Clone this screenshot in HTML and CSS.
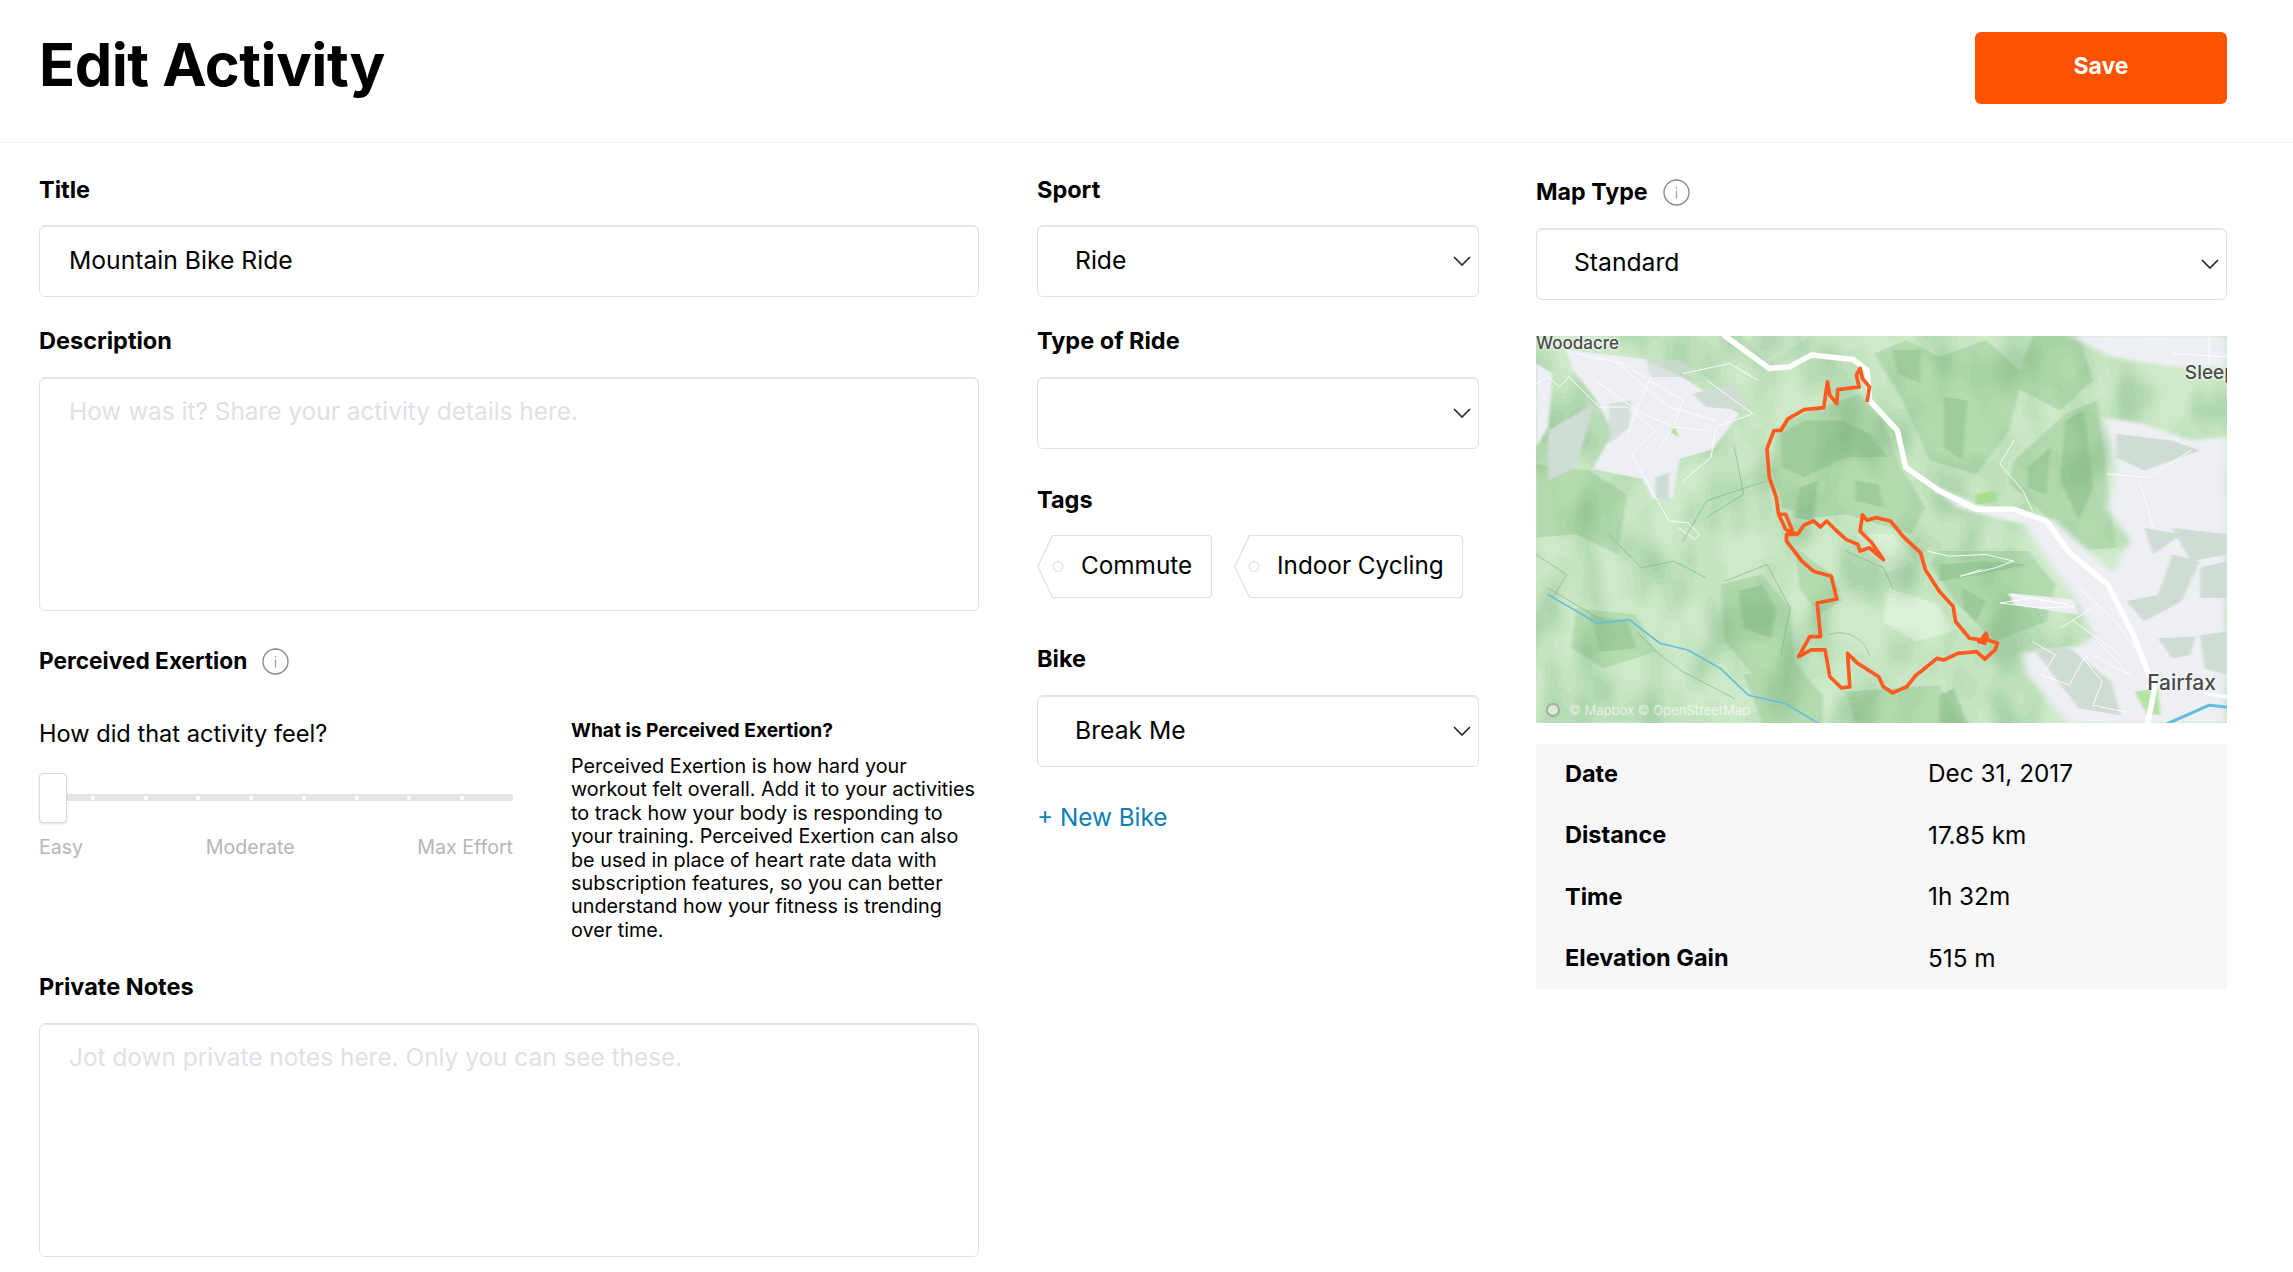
FILE: index.html
```html
<!DOCTYPE html>
<html lang="en">
<head>
<meta charset="utf-8">
<title>Edit Activity</title>
<link rel="stylesheet" href="styles.css">
</head>
<body>
<header class="page-head">
  <h1 class="page-title">Edit Activity</h1>
  <button class="save-btn" type="button">Save</button>
</header>
<main class="form-grid">
  <section class="col-left">
    <div class="label label-first">Title</div>
    <div class="field field-text">Mountain Bike Ride</div>
    <div class="label label-next">Description</div>
    <div class="field field-area placeholder">How was it? Share your activity details here.</div>
    <div class="label label-exertion">Perceived Exertion
      <svg class="info" viewBox="0 0 27 27"><circle cx="13.5" cy="13.5" r="12.5" fill="none" stroke="#8c8c90" stroke-width="1.4"/><rect x="12.9" y="11.5" width="1.2" height="8" fill="#9a9a9e"/><rect x="12.9" y="8" width="1.2" height="1.6" fill="#9a9a9e"/></svg>
    </div>
    <div class="exertion">
      <div class="exertion-main">
        <div class="feel">How did that activity feel?</div>
        <div class="slider">
          <div class="track"><i></i><i></i><i></i><i></i><i></i><i></i><i></i><i></i></div>
          <div class="thumb"></div>
        </div>
        <div class="scale"><span>Easy</span><span>Moderate</span><span>Max Effort</span></div>
      </div>
      <div class="exertion-help">
        <div class="help-title">What is Perceived Exertion?</div>
        <p class="help-text">Perceived Exertion is how hard your<br>workout felt overall. Add it to your activities<br>to track how your body is responding to<br>your training. Perceived Exertion can also<br>be used in place of heart rate data with<br>subscription features, so you can better<br>understand how your fitness is trending<br>over time.</p>
      </div>
    </div>
    <div class="label label-notes">Private Notes</div>
    <div class="field field-area placeholder">Jot down private notes here. Only you can see these.</div>
  </section>

  <section class="col-mid">
    <div class="label label-first">Sport</div>
    <div class="field field-select">Ride<svg class="chev" viewBox="0 0 18 10"><path d="M1 1l8 8 8-8" fill="none" stroke="#222" stroke-width="1.6"/></svg></div>
    <div class="label label-next">Type of Ride</div>
    <div class="field field-select"><svg class="chev" viewBox="0 0 18 10"><path d="M1 1l8 8 8-8" fill="none" stroke="#222" stroke-width="1.6"/></svg></div>
    <div class="label label-tags">Tags</div>
    <div class="tags">
      <div class="tag tag-first"><svg class="tag-shape" viewBox="0 0 175 63" preserveAspectRatio="none"><path d="M15.5 .5H171a3.5 3.5 0 0 1 3.5 3.5V59a3.5 3.5 0 0 1-3.5 3.5H15.5L.8 31.5z" fill="#fff" stroke="#dfdfe8" stroke-width="1.2"/><circle cx="21" cy="31.5" r="4.8" fill="#fff" stroke="#dfdfe8" stroke-width="1.2"/></svg><span>Commute</span></div>
      <div class="tag tag-second"><svg class="tag-shape" viewBox="0 0 229 63" preserveAspectRatio="none"><path d="M15.5 .5H225a3.5 3.5 0 0 1 3.5 3.5V59a3.5 3.5 0 0 1-3.5 3.5H15.5L.8 31.5z" fill="#fff" stroke="#dfdfe8" stroke-width="1.2"/><circle cx="20" cy="31.5" r="4.8" fill="#fff" stroke="#dfdfe8" stroke-width="1.2"/></svg><span>Indoor Cycling</span></div>
    </div>
    <div class="label label-bike">Bike</div>
    <div class="field field-select">Break Me<svg class="chev" viewBox="0 0 18 10"><path d="M1 1l8 8 8-8" fill="none" stroke="#222" stroke-width="1.6"/></svg></div>
    <a class="new-bike" href="#">+ New Bike</a>
  </section>

  <section class="col-right">
    <div class="label label-map">Map Type
      <svg class="info" viewBox="0 0 27 27"><circle cx="13.5" cy="13.5" r="12.5" fill="none" stroke="#8c8c90" stroke-width="1.4"/><rect x="12.9" y="11.5" width="1.2" height="8" fill="#9a9a9e"/><rect x="12.9" y="8" width="1.2" height="1.6" fill="#9a9a9e"/></svg>
    </div>
    <div class="field field-select field-map">Standard<svg class="chev" viewBox="0 0 18 10"><path d="M1 1l8 8 8-8" fill="none" stroke="#222" stroke-width="1.6"/></svg></div>
    <div class="map">
      <svg class="map-art" viewBox="34 48 1484 1155" preserveAspectRatio="none">
        <defs>
          <filter id="soft" x="-5%" y="-5%" width="110%" height="110%"><feGaussianBlur stdDeviation="3 1.5"/></filter>
          <filter id="softer" x="-5%" y="-5%" width="110%" height="110%"><feGaussianBlur stdDeviation="9 5"/></filter>
          <filter id="hills" x="0" y="0" width="100%" height="100%" color-interpolation-filters="sRGB">
            <feTurbulence type="fractalNoise" baseFrequency=".011 .0048" numOctaves="2" seed="11"/>
            <feColorMatrix values="0 0 0 0 .38  0 0 0 0 .63  0 0 0 0 .41  1.9 0 0 0 -.62"/>
            <feComponentTransfer><feFuncA type="discrete" tableValues="0 .03 .08 .14 .2 .26 .32 .36"/></feComponentTransfer>
            <feGaussianBlur stdDeviation="1.6 .8"/>
          </filter>
        </defs>
        <rect x="34" y="48" width="1484" height="1155" fill="#cdeac8"/>
        <g filter="url(#soft)">
          <g fill="#dcf1d8">
            <path d="M480 48H620L560 110 530 130z"/>
            <path d="M790 800L900 850 930 930 850 960 780 900z"/>
            <path d="M720 640L800 640 850 720 780 760z"/>
          </g>
          <g fill="#acd5a8" opacity=".75">
            <path d="M550 320L610 280 730 220 780 300 810 420 870 560 840 640 700 580 640 590 560 560 540 450z"/>
            <path d="M760 100L830 60 900 110 1000 60 1080 160 1050 330 980 460 880 420 820 240z"/>
            <path d="M1060 420L1170 280 1240 240 1280 680 1180 690 1140 600 1110 560 1050 490z"/>
            <path d="M900 690L1090 690 1150 790 1130 900 1020 960 940 850 880 730z"/>
            <path d="M34 430L150 450 230 520 210 700 120 640 34 650z"/>
            <path d="M430 790L520 760 580 860 590 1040 500 1060 440 960z"/>
            <path d="M120 860L250 880 290 990 180 1040 110 980z"/>
            <path d="M480 1060L590 1020 650 1120 650 1203H520z"/>
            <path d="M590 680L670 760 690 840 640 880 600 800z"/>
            <path d="M700 1110L900 1090 950 1203H720z"/>
            <path d="M1100 48H1200L1230 180 1160 270 1060 200z"/>
          </g>
          <g fill="#95c695" opacity=".7">
            <path d="M560 340L610 300 690 300 750 340 790 410 700 410 610 470 560 440z"/>
            <path d="M1170 300L1210 270 1230 500 1200 600 1160 480z"/>
            <path d="M1090 440L1140 380 1130 520 1090 500z"/>
            <path d="M910 230L960 240 950 420 910 380z"/>
            <path d="M800 90L860 90 860 190 810 160z"/>
            <path d="M470 810L520 790 550 860 540 950 480 920z"/>
            <path d="M900 730L1000 720 1090 730 990 760 900 780z"/>
            <path d="M950 800L1000 840 980 900 950 860z"/>
            <path d="M150 880L230 900 250 980 170 990z"/>
            <path d="M720 480L770 490 780 560 720 540z"/>
            <path d="M600 500L640 480 630 600 590 590z"/>
            <path d="M900 1120L930 1100 960 1203H900z"/>
          </g>
        </g>
        <rect x="34" y="48" width="1484" height="1155" filter="url(#hills)"/>
        <g filter="url(#softer)" fill="#eeeff4">
          <path d="M1074 596L1145 596 1274 755 1288 695 1346 616 1518 596V1203H1174L1088 1053 1081 993 1203 973 1231 943 1181 814z"/>
          <path d="M1180 48H1518V140H1400L1270 110z"/>
          <path d="M1250 290L1340 310 1440 360 1518 350V620L1400 640 1320 680 1260 560 1280 440z"/>
          <path d="M880 490L1000 560 1100 580 1120 620 1020 590 940 560z"/>
        </g>
        <g filter="url(#soft)">
          <g fill="#eeeff4">
            <path d="M98 88L270 118 356 177 471 281 413 386 342 415 328 534 285 534 263 475 156 445 199 336 163 237 113 147z"/>
            <path d="M34 130L70 160 60 320 34 380z"/>
            <path d="M1050 815L1190 835 1200 880 1060 850z"/>
          </g>
          <g fill="#cfdcd3">
            <path d="M270 120L345 120 390 170 280 170z" opacity=".7"/>
            <path d="M370 220L460 190 490 270 400 260z"/>
            <path d="M190 250L240 240 235 320 190 370z" opacity=".8"/>
            <path d="M60 330L160 250 120 440 60 480z"/>
            <path d="M290 470L320 455 320 540 290 530z"/>
            <path d="M1302 840L1370 820 1400 700 1460 720 1420 840 1340 900z"/>
            <path d="M1370 950L1450 945 1440 1000 1400 1010z"/>
            <path d="M1460 740L1518 720V830L1460 830z"/>
            <path d="M1100 980L1180 980 1270 1080 1290 1180 1200 1160z"/>
            <path d="M1280 340L1400 360 1460 390 1340 450 1280 410z"/>
            <path d="M1400 620L1518 640V700L1440 720z"/>
            <path d="M1340 620L1420 640 1360 700z"/>
            <path d="M1460 940L1518 930V1060L1470 1040z"/>
          </g>
          <path d="M980 520L1020 508 1025 540 978 552z" fill="#a5de8e"/>
          <path d="M330 310L340 350 324 335z" fill="#a5de8e"/>
          <path d="M1320 1110L1370 1100 1375 1180 1345 1175z" fill="#b5e3a6"/>
        </g>
        <g fill="none" stroke="#fff" stroke-linejoin="round" stroke-linecap="round">
          <g stroke-width="1" opacity=".9">
            <path vector-effect="non-scaling-stroke" d="M34 190L60 170 85 200 105 170 170 260 230 260 290 330 240 400 270 480 320 600 360 605 385 640 375 655 340 620"/>
            <path vector-effect="non-scaling-stroke" d="M120 100L220 130 300 200 350 240 330 320 300 380M210 130L320 260 420 300M160 180L250 270 330 320 400 330M280 170L250 270 230 340M400 180L500 280 420 320 410 410 350 480M350 160L450 130 510 180"/>
            <path vector-effect="non-scaling-stroke" d="M875 690L920 705 1000 700 1060 720 1020 740 945 765 990 745"/>
            <path vector-effect="non-scaling-stroke" d="M1050 820L1180 850 1100 830 1030 845 1120 860 1190 855"/>
            <path vector-effect="non-scaling-stroke" d="M1100 960L1150 1000 1120 1060 1180 1090 1210 1010 1250 1080 1230 1150 1300 1170M1230 1000L1310 1060 1240 960"/>
            <path vector-effect="non-scaling-stroke" d="M1200 800L1280 900 1330 1000M1240 850L1160 920M1190 900L1290 1000"/>
            <path vector-effect="non-scaling-stroke" d="M1060 360L1030 430 1080 510 1100 570"/>
            <path vector-effect="non-scaling-stroke" d="M1260 460L1350 470 1440 390M1330 480L1360 620M1400 100L1518 110M1480 48V130"/>
          </g>
          <g stroke="#7fb384" stroke-width="1" opacity=".65">
            <path vector-effect="non-scaling-stroke" d="M60 800L180 900M250 930L300 1000 350 1050 460 1130M440 780L530 730 580 860 560 1000M190 640L260 740 330 720 400 770"/>
            <path vector-effect="non-scaling-stroke" d="M660 940C700 920 740 950 750 1000M700 690L780 740 800 800M530 480L400 540 350 660M34 700L100 760 70 830M460 380L480 520 400 590"/>
          </g>
          <path vector-effect="non-scaling-stroke" stroke-width="5.5" d="M440 48L535 145 578 140 625 105 715 118 745 150 750 240 810 330 828 440 900 510 980 565 1060 565 1130 600 1180 695 1262 790 1320 950 1362 1100 1348 1203"/>
          <path vector-effect="non-scaling-stroke" stroke-width="3.5" d="M1470 1115L1518 1125"/>
          <g stroke="#63bddc" stroke-width="1.6">
            <path vector-effect="non-scaling-stroke" d="M60 820L165 905 235 895 300 965 360 985 430 1040 490 1120 570 1145 645 1208"/>
            <path vector-effect="non-scaling-stroke" stroke-width="3" d="M1390 1205L1480 1150 1518 1155"/>
          </g>
        </g>
        <path fill="none" stroke="#ff5a20" vector-effect="non-scaling-stroke" stroke-width="3.7" stroke-linejoin="round" d="M745 245L750 200 735 175 730 145 722 165 728 200 682 208 680 250 665 225 660 185 652 262 610 268 575 295 560 330 545 330 530 385 535 470 550 530 555 580 570 625 595 640 610 612 630 600 645 618 658 600 680 630 700 655 725 670 730 690 750 680 780 715 755 665 730 630 735 582 745 598 765 590 795 600 825 650 860 695 870 745 900 810 930 855 935 900 965 950 990 955 1000 935 1005 955 1025 965 1020 985 998 1012 980 990 940 995 910 1015 895 1010 860 1050 850 1060 830 1095 800 1113 780 1095 770 1065 725 1025 703 995 708 1095 690 1098 665 1065 655 985 625 985 598 1005 622 945 645 945 638 845 680 833 668 765 630 750 605 720 572 660 572 640 595 640M555 580L570 580 585 630M985 960L1000 945 998 965z"/>
      </svg>
      <span class="place place-woodacre">Woodacre</span>
      <span class="place place-sleepy">Sleep</span>
      <span class="place place-fairfax">Fairfax</span>
      <span class="attrib"><i class="attrib-logo"></i>© Mapbox © OpenStreetMap</span>
    </div>
    <dl class="stats">
      <div class="stat"><dt>Date</dt><dd>Dec 31, 2017</dd></div>
      <div class="stat"><dt>Distance</dt><dd>17.85 km</dd></div>
      <div class="stat"><dt>Time</dt><dd>1h 32m</dd></div>
      <div class="stat"><dt>Elevation Gain</dt><dd>515 m</dd></div>
    </dl>
  </section>
</main>
</body>
</html>
```
FILE: styles.css
```css
* { box-sizing: border-box; }
html, body { margin: 0; background: #fff; }
body { font-family: Inter, "Liberation Sans", sans-serif; color: #000; height: 1272px; overflow: hidden; }

.page-head { display: flex; justify-content: space-between; align-items: flex-start; height: 143px; padding: 30px 66px 0 39px; border-bottom: 1px solid #f2f2f5; }
.page-title { margin: 0; font-size: 59.5px; line-height: 68px; font-weight: 700; letter-spacing: -0.5px; }
.save-btn { width: 252px; height: 72px; margin-top: 2px; border: 0; border-radius: 6px; background: #fc5200; color: #fff; font: 700 23px Inter, sans-serif; padding: 0 0 4px; }

.form-grid { display: grid; grid-template-columns: 940px 442px 690px; column-gap: 58px; padding: 32px 0 0 39px; }
.col-right { margin-left: -1px; }

.label { font-size: 23.5px; line-height: 28px; font-weight: 700; margin-bottom: 22px; display: flex; align-items: center; }
.label-first { position: relative; top: 1px; }
.label-next { margin-top: 30px; }
.label-exertion { margin-top: 36px; margin-bottom: 0; font-size: 22.7px; }
.label-notes { margin-top: 0; }
.label-tags { margin-top: 37px; margin-bottom: 21px; }
.label-bike { margin-top: 47px; }
.label-map { margin-top: 3px; margin-bottom: 22px; font-size: 23.2px; }

.info { width: 27px; height: 27px; margin-left: 15px; }

.field { border: 1px solid #dfdfe8; border-radius: 6px; box-shadow: inset 0 1px 1px #e6e6ee; background: #fff; font-size: 24.7px; }
.field-text { height: 72px; line-height: 69px; padding-left: 29px; }
.field-select { height: 72px; line-height: 69px; padding-left: 37px; position: relative; }
.field-map { line-height: 67px; }
.field-area { height: 234px; padding: 19px 29px; line-height: 28px; font-size: 24.4px; }
.placeholder { color: #dfdfe8; }
.chev { position: absolute; right: 7px; top: 30px; width: 18px; height: 10px; }

.exertion { display: grid; grid-template-columns: 474px 408px; column-gap: 58px; margin-top: 26px; height: 272px; }
.feel { font-size: 23.6px; line-height: 28px; margin-top: 19px; }
.slider { position: relative; height: 50px; margin-top: 25px; }
.track { position: absolute; left: 0; right: 0; top: 21px; height: 7px; background: #e5e5e5; border-radius: 1px; display: flex; justify-content: space-between; align-items: center; padding: 0 49px 0 52px; }
.track i { width: 4px; height: 4px; border-radius: 50%; background: #fff; }
.thumb { position: absolute; left: 0; top: 0; width: 28px; height: 50px; background: #fff; border: 1px solid #d7d7de; border-radius: 4px; box-shadow: 0 1px 2px rgba(0,0,0,.12); }
.scale { display: flex; justify-content: space-between; margin-top: 12px; font-size: 19.6px; line-height: 24px; color: #b5b5ba; }
.help-title { font-size: 19.2px; line-height: 24px; font-weight: 700; margin-top: 17px; }
.help-text { margin: 13px 0 0; font-size: 19.8px; line-height: 23.4px; }

.tags { display: flex; gap: 22px; height: 63px; }
.tag { position: relative; height: 63px; font-size: 24.3px; line-height: 61px; }
.tag-first { width: 175px; padding-left: 44px; }
.tag-second { width: 229px; padding-left: 43px; }
.tag-shape { position: absolute; left: 0; top: 0; width: 100%; height: 100%; }
.tag span { position: relative; }

.new-bike { display: block; margin-top: 36px; font-size: 24.3px; line-height: 28px; color: #0d7fb5; text-decoration: none; }

.map { position: relative; height: 387px; margin-top: 36px; overflow: hidden; }
.map-art { display: block; width: 100%; height: 100%; }
.place { position: absolute; font-size: 20px; line-height: 22px; font-weight: 500; color: #4a4a4a; text-shadow: 0 0 3px #fff, 0 0 3px #fff; white-space: nowrap; }
.place-woodacre { left: 0; top: -4px; font-size: 17px; }
.place-sleepy { right: -9px; top: 26px; font-size: 19px; }
.place-fairfax { right: 11px; top: 334px; font-size: 21px; line-height: 26px; }
.attrib { position: absolute; left: 10px; bottom: 5px; display: flex; align-items: center; gap: 9px; font-size: 13px; line-height: 16px; color: rgba(255,255,255,.6); }
.attrib-logo { flex: none; width: 14px; height: 14px; border-radius: 50%; border: 2px solid rgba(120,120,120,.55); background: rgba(255,255,255,.5); }

.stats { margin: 21px 0 0; padding: 0; height: 246px; background: #f7f7fa; }
.stat { display: grid; grid-template-columns: 363px 1fr; height: 61.5px; padding: 0 0 3px 29px; align-items: center; font-size: 24.3px; }
.stat dt { font-weight: 700; font-size: 23.5px; }
.stat dd { margin: 0; }
```
